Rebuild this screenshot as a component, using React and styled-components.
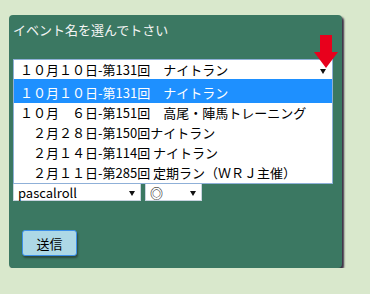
import React from "react";
import styled, { createGlobalStyle } from "styled-components";

const GlobalStyle = createGlobalStyle`
    body {
        margin: 0;
        background-color: #d9e8cc;
        font-family: "Noto Sans CJK JP", "DejaVu Sans", sans-serif;
    }
`;

const Panel = styled.div`
    position: relative;
    box-sizing: border-box;
    margin: 15px 0 0 9px;
    width: 333px;
    height: 253px;
    padding: 6px 9px 0 4px;
    background-color: #3b7862;
    border-radius: 4px;
    box-shadow: 2px 2px 2px #3a2e44;
`;

const Title = styled.div`
    height: 18px;
    line-height: 18px;
    font-size: 13px;
    color: #f4f4f4;
    margin-bottom: 20px;
`;

const SelectBox = styled.div`
    box-sizing: border-box;
    display: flex;
    align-items: center;
    width: 320px;
    height: 20px;
    padding: 0 6px;
    background: #fff;
    border: 1px solid #8fb0d8;
    border-bottom: none;
    font-size: 13px;
    color: #000;
`;

const Label = styled.span`
    flex-grow: 1;
    white-space: pre;
`;

const Caret = styled.span`
    width: 0;
    height: 0;
    border-left: 3px solid transparent;
    border-right: 3px solid transparent;
    border-top: 5px solid #111;
    margin-top: 3px;
`;

const List = styled.ul`
    box-sizing: border-box;
    width: 320px;
    margin: 0;
    padding: 0;
    list-style: none;
    background: #fff;
    border: 1px solid #8fb0d8;
    border-top: none;
`;

const Row = styled.li`
    height: 20px;
    line-height: 20px;
    padding: ${p => (p.$active ? "4px" : "0")} 6px 0;
    font-size: 13px;
    white-space: pre;
    color: ${p => (p.$active ? "#fff" : "#000")};
    background: ${p => (p.$active ? "#1e90ff" : "#fff")};
`;

const FieldRow = styled.div`
    display: flex;
    gap: 4px;
`;

const SmallSelect = styled.div`
    box-sizing: border-box;
    display: flex;
    align-items: center;
    width: ${p => p.$width}px;
    height: 17px;
    padding: 0 5px 0 4px;
    background: #fff;
    border: 1px solid #c8d4e0;
    border-top: none;
    font-size: 13px;
    color: #000;
`;

const SendButton = styled.button`
    box-sizing: border-box;
    display: block;
    margin: 29px 0 0 9px;
    width: 55px;
    height: 26px;
    padding: 0;
    background: #add8e6;
    border: 1px solid #3c8fe8;
    border-radius: 3px;
    box-shadow: 1px 2px 2px #2c4a3e;
    font-family: inherit;
    font-size: 13px;
    color: #000;
`;

const Pointer = styled.svg`
    position: absolute;
    left: 305px;
    top: 20px;
`;

const events = [
    "１０月１０日-第131回　ナイトラン",
    "１０月　６日-第151回　高尾・陣馬トレーニング",
    "　２月２８日-第150回ナイトラン",
    "　２月１４日-第114回 ナイトラン",
    "　２月１１日-第285回 定期ラン（ＷＲＪ主催）",
];

export default function App() {
    return (
        <>
            <GlobalStyle />
            <Panel>
                <Title>イベント名を選んでトさい</Title>
                <SelectBox>
                    <Label>{events[0]}</Label>
                    <Caret />
                </SelectBox>
                <List>
                    {events.map((name, i) => (
                        <Row key={i} $active={i === 0}>{name}</Row>
                    ))}
                </List>
                <FieldRow>
                    <SmallSelect $width={128}>
                        <Label>pascalroll</Label>
                        <Caret />
                    </SmallSelect>
                    <SmallSelect $width={57}>
                        <Label>◎</Label>
                        <Caret />
                    </SmallSelect>
                </FieldRow>
                <SendButton>送信</SendButton>
                <Pointer width="24" height="33" viewBox="0 0 24 33">
                    <polygon points="6,0 18,0 18,17 24,17 12,33 0,17 6,17" fill="#e8001c" />
                </Pointer>
            </Panel>
        </>
    );
}
